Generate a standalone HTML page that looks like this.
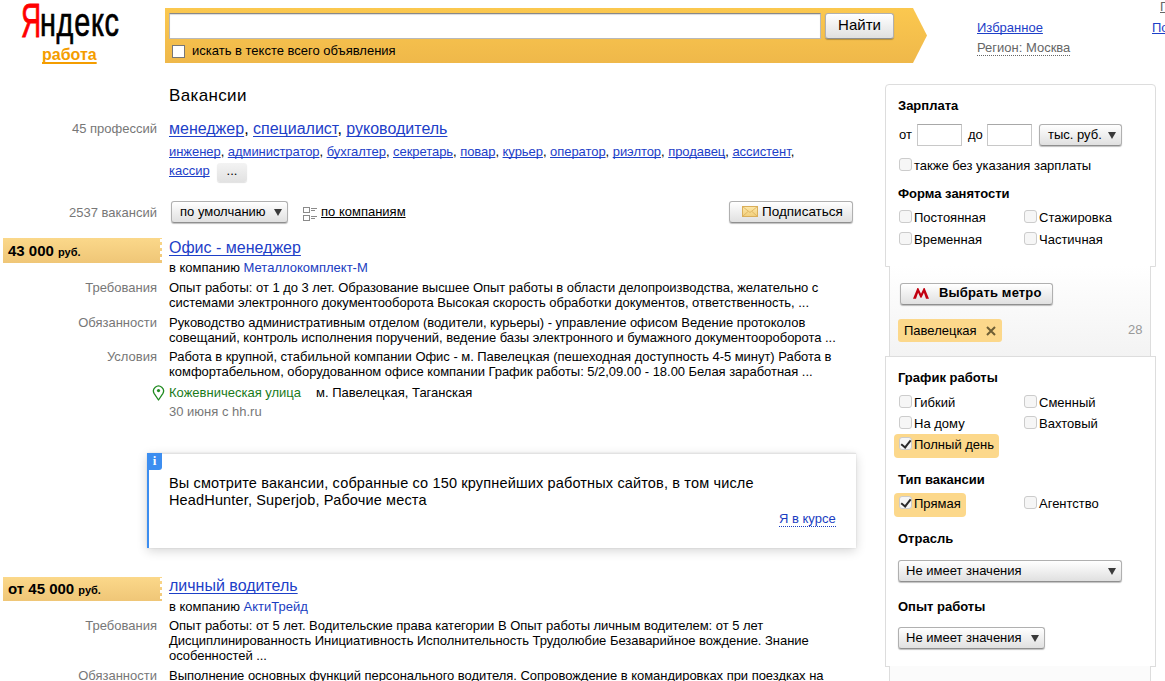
<!DOCTYPE html>
<html><head><meta charset="utf-8">
<style>
*{margin:0;padding:0;box-sizing:border-box}
html,body{width:1165px;height:681px;overflow:hidden;background:#fff}
body{font-family:"Liberation Sans",sans-serif;font-size:13px;color:#000;position:relative}
.a{position:absolute;white-space:nowrap}
a,.lnk{color:#1d40c8;text-decoration:underline}
*{text-decoration-skip-ink:none}
.t16 a{text-underline-offset:2px}
.g{color:#666}
.r{text-align:right}
.btn{position:absolute;border:1px solid #b0b0b0;border-bottom-color:#8f8f8f;border-radius:3px;background:linear-gradient(#fff,#e0e0e0);box-shadow:0 1px 1px rgba(0,0,0,.25)}
.cb{position:absolute;width:13px;height:13px;border:1px solid #ccc;border-radius:3px;background:#f6f6f6}
.lbl{position:absolute;color:#777;text-align:right;width:157px;left:0;white-space:nowrap}
.txt{position:absolute;left:169px;white-space:nowrap;line-height:15px;letter-spacing:-.035px}
.price{position:absolute;left:3px;width:159px;height:25px;background:linear-gradient(#fbd88a,#efc677);font-weight:bold}
.price::after{content:"";position:absolute;right:0;top:1px;width:2px;height:24px;background:repeating-linear-gradient(#fff 0,#fff 3px,transparent 3px,transparent 6px)}
.inp{position:absolute;background:#fff;border:1px solid #c8c8c8;border-top-color:#a8a8a8}
.arr{position:absolute;top:7px;width:0;height:0;border-left:4px solid transparent;border-right:4px solid transparent;border-top:7px solid #3a3a3a}
.chk::after{content:"";position:absolute;left:3px;top:0px;width:4px;height:8px;border-right:2px solid #2a2a2a;border-bottom:2px solid #2a2a2a;transform:rotate(38deg)}
.hd{position:absolute;font-weight:bold;white-space:nowrap}
</style></head><body>

<!-- logo -->
<div class="a" style="left:21px;top:-7px;font-size:49px;line-height:54px;color:#f00;-webkit-text-stroke:.9px #f00;transform-origin:0 0;transform:scaleX(.57)">Я</div>
<div class="a" style="left:40px;top:-3px;font-size:40px;line-height:50px;-webkit-text-stroke:.7px #000;letter-spacing:1px;transform-origin:0 0;transform:scaleX(.72)">ндекс</div>
<div class="a" style="left:42px;top:46px;font-size:16px;font-weight:bold;color:#f49d00;text-decoration:underline;text-decoration-thickness:2px;text-underline-offset:2px">работа</div>

<!-- search bar -->
<svg class="a" style="left:165px;top:8px" width="765" height="55">
<defs><linearGradient id="yg" x1="0" y1="0" x2="0" y2="1"><stop offset="0" stop-color="#fbc84f"/><stop offset="1" stop-color="#efb84a"/></linearGradient></defs>
<path d="M0 0H748L762 27.5L748 55H0Z" fill="url(#yg)"/>
</svg>
<div class="a" style="left:169px;top:13px;width:652px;height:26px;background:#fff;border:1px solid #b9b9b9;border-top-color:#888;box-shadow:inset 0 1px 1px rgba(0,0,0,.15)"></div>
<div class="btn" style="left:825px;top:13px;width:69px;height:26px;font-size:15px;text-align:center;line-height:21px">Найти</div>
<div class="a" style="left:172px;top:45px;width:13px;height:13px;background:#fff;border:1px solid #777"></div>
<div class="a" style="left:192px;top:43px;font-size:13px">искать в тексте всего объявления</div>

<!-- top right -->
<div class="a" style="left:977px;top:20px;font-size:13px"><a>Избранное</a></div>
<div class="a" style="left:977px;top:40px;font-size:13px;color:#666;border-bottom:1px dotted #666;line-height:15px">Регион: Москва</div>
<div class="a" style="left:1160px;top:-1px;font-size:13px;color:#666;text-decoration:underline">П</div>
<div class="a" style="left:1152px;top:20px;font-size:13px"><a>По</a></div>

<!-- main -->
<div class="a" style="left:169px;top:86px;font-size:17px;letter-spacing:.35px">Вакансии</div>

<div class="lbl" style="top:121px">45 профессий</div>
<div class="a t16" style="left:169px;top:120px;font-size:16px"><a>менеджер</a>, <a>специалист</a>, <a>руководитель</a></div>
<div class="a" style="left:169px;top:144px;font-size:13px;letter-spacing:-.05px"><a>инженер</a>, <a>администратор</a>, <a>бухгалтер</a>, <a>секретарь</a>, <a>повар</a>, <a>курьер</a>, <a>оператор</a>, <a>риэлтор</a>, <a>продавец</a>, <a>ассистент</a>,</div>
<div class="a" style="left:169px;top:163px;font-size:13px"><a>кассир</a></div>
<div class="a" style="left:217px;top:163px;width:30px;height:19px;background:linear-gradient(#f3f3f3,#e2e2e2);border-radius:3px;box-shadow:0 1px 1px rgba(0,0,0,.12);text-align:center;line-height:16px">...</div>

<div class="lbl" style="top:205px">2537 вакансий</div>
<div class="btn" style="left:171px;top:201px;width:117px;height:22px;line-height:20px;padding-left:8px">по умолчанию<span class="arr" style="left:102px"></span></div>
<svg class="a" style="left:302px;top:206px" width="16" height="16" viewBox="0 0 16 16" fill="none" stroke="#8a8a8a" stroke-width="1"><rect x="1.5" y="1.5" width="6" height="5"/><rect x="1.5" y="9.5" width="6" height="5"/><path d="M9 2.5H15M9 4.5H13M9 10.5H15M9 12.5H13"/></svg>
<div class="a" style="left:321px;top:204px"><span style="text-decoration:underline">по компаниям</span></div>
<div class="btn" style="left:729px;top:201px;width:124px;height:22px;line-height:20px;padding-left:32px;font-size:13.5px">Подписаться</div>
<svg class="a" style="left:742px;top:206px" width="16" height="11" viewBox="0 0 16 11"><defs><linearGradient id="eg" x1="0" y1="0" x2="0" y2="1"><stop offset="0" stop-color="#fde7a8"/><stop offset="1" stop-color="#f1cf7c"/></linearGradient></defs><rect x=".5" y=".5" width="15" height="10" fill="url(#eg)" stroke="#d9ae5a"/><path d="M.5 .5L8 6.5L15.5 .5M.5 10.5L6 5.5M15.5 10.5L10 5.5" fill="none" stroke="#d9ae5a" stroke-width=".8"/></svg>

<!-- vacancy 1 -->
<div class="price" style="top:238px"><span class="a" style="left:5px;top:4px;font-size:15px">43 000 <span style="font-size:11px">руб.</span></span></div>
<div class="a t16" style="left:169px;top:239px;font-size:16px"><a>Офис - менеджер</a></div>
<div class="a" style="left:169px;top:260px">в компанию <span style="color:#1a3dc1">Металлокомплект-М</span></div>
<div class="lbl" style="top:280px">Требования</div>
<div class="txt" style="top:280px">Опыт работы: от 1 до 3 лет. Образование высшее Опыт работы в области делопроизводства, желательно с<br>системами электронного документооборота Высокая скорость обработки документов, ответственность, ...</div>
<div class="lbl" style="top:315px">Обязанности</div>
<div class="txt" style="top:315px">Руководство административным отделом (водители, курьеры) - управление офисом Ведение протоколов<br>совещаний, контроль исполнения поручений, ведение базы электронного и бумажного документоороборота ...</div>
<div class="lbl" style="top:349px">Условия</div>
<div class="txt" style="top:349px">Работа в крупной, стабильной компании Офис - м. Павелецкая (пешеходная доступность 4-5 минут) Работа в<br>комфортабельном, оборудованном офисе компании График работы: 5/2,09.00 - 18.00 Белая заработная ...</div>
<svg class="a" style="left:152px;top:385px" width="13" height="16" viewBox="0 0 13 16"><path d="M6.5 15L2.2 8.6A5 5 0 1 1 10.8 8.6Z" fill="none" stroke="#1f8a1f" stroke-width="1.3" stroke-linejoin="round"/><circle cx="6.5" cy="5.6" r="1.6" fill="#1f8a1f"/></svg>
<div class="a" style="left:169px;top:385px;color:#1a7a1a">Кожевническая улица</div>
<div class="a" style="left:316px;top:385px">м. Павелецкая, Таганская</div>
<div class="a g" style="left:169px;top:404px;color:#777">30 июня с hh.ru</div>

<!-- info box -->
<div class="a" style="left:147px;top:453px;width:709px;height:95px;background:#fff;border-left:2px solid #3d8ef0;border-top:1px solid #e2e2e2;box-shadow:0 3px 10px rgba(0,0,0,.16),0 0 2px rgba(0,0,0,.1)"></div>
<div class="a" style="left:147px;top:453px;width:15px;height:17px;background:#3d8ef0;color:#fff;font-weight:bold;font-family:'Liberation Serif',serif;font-size:13px;text-align:center;line-height:16px;border-radius:0 0 3px 0">i</div>
<div class="a" style="left:169px;top:475px;font-size:14.5px;line-height:17px;letter-spacing:.15px">Вы смотрите вакансии, собранные со 150 крупнейших работных сайтов, в том числе<br>HeadHunter, Superjob, Рабочие места</div>
<div class="a" style="left:779px;top:512px;color:#1a3dc1;border-bottom:1px dotted #1a3dc1;line-height:14px">Я в курсе</div>

<!-- vacancy 2 -->
<div class="price" style="top:577px;height:24px"><span class="a" style="left:5px;top:3px;font-size:15px">от 45 000 <span style="font-size:11px">руб.</span></span></div>
<div class="a t16" style="left:169px;top:577px;font-size:16px"><a>личный водитель</a></div>
<div class="a" style="left:169px;top:599px">в компанию <span style="color:#1a3dc1">АктиТрейд</span></div>
<div class="lbl" style="top:618px">Требования</div>
<div class="txt" style="top:618px">Опыт работы: от 5 лет. Водительские права категории В Опыт работы личным водителем: от 5 лет<br>Дисциплинированность Инициативность Исполнительность Трудолюбие Безаварийное вождение. Знание<br>особенностей ...</div>
<div class="lbl" style="top:668px">Обязанности</div>
<div class="txt" style="top:668px">Выполнение основных функций персонального водителя. Сопровождение в командировках при поездках на</div>

<!-- sidebar -->
<div class="a" style="left:885px;top:84px;width:271px;height:183px;border:1px solid #ddd;border-bottom:1px solid #ddd;border-radius:4px 4px 0 0"></div>
<div class="hd" style="left:898px;top:98px">Зарплата</div>
<div class="a" style="left:899px;top:127px">от</div>
<div class="inp" style="left:917px;top:124px;width:45px;height:22px"></div>
<div class="a" style="left:968px;top:127px">до</div>
<div class="inp" style="left:987px;top:124px;width:45px;height:22px"></div>
<div class="btn" style="left:1039px;top:124px;width:83px;height:22px;line-height:20px;padding-left:8px">тыс. руб. <span class="arr" style="left:68px"></span></div>
<div class="cb" style="left:899px;top:158px"></div>
<div class="a" style="left:914px;top:158px">также без указания зарплаты</div>
<div class="hd" style="left:898px;top:186px">Форма занятости</div>
<div class="cb" style="left:899px;top:210px"></div><div class="a" style="left:914px;top:210px">Постоянная</div>
<div class="cb" style="left:1024px;top:210px"></div><div class="a" style="left:1039px;top:210px">Стажировка</div>
<div class="cb" style="left:899px;top:232px"></div><div class="a" style="left:914px;top:232px">Временная</div>
<div class="cb" style="left:1024px;top:232px"></div><div class="a" style="left:1039px;top:232px">Частичная</div>

<div class="a" style="left:889px;top:266px;width:262px;height:91px;border-left:1px solid #ddd;border-right:1px solid #ddd;background:linear-gradient(#fff,#f3f3f3)"></div>
<div class="btn" style="left:900px;top:283px;width:153px;height:22px;font-weight:bold;font-size:13px;letter-spacing:.15px;line-height:18px;padding-left:38px">Выбрать метро</div>
<svg class="a" style="left:913px;top:288px" width="16" height="11" viewBox="0 0 16 11"><path d="M0 10.8L4.4 0H5.3L8 5.8L10.7 0H11.6L16 10.8H13L10.9 4.8L8.5 9.8H7.5L5.1 4.8L3 10.8Z" fill="#c20010"/></svg>
<div class="a" style="left:898px;top:319px;width:104px;height:23px;background:#fcd88b;border-radius:3px"></div>
<div class="a" style="left:904px;top:323px">Павелецкая</div>
<svg class="a" style="left:986px;top:326px" width="10" height="10" viewBox="0 0 10 10"><path d="M1 1L9 9M9 1L1 9" stroke="#6e5e34" stroke-width="2"/></svg>
<div class="a" style="left:1128px;top:322px;color:#999">28</div>

<div class="a" style="left:885px;top:356px;width:271px;height:311px;border:1px solid #ddd"></div>
<div class="hd" style="left:898px;top:370px">График работы</div>
<div class="cb" style="left:899px;top:395px"></div><div class="a" style="left:914px;top:395px">Гибкий</div>
<div class="cb" style="left:1024px;top:395px"></div><div class="a" style="left:1039px;top:395px">Сменный</div>
<div class="cb" style="left:899px;top:416px"></div><div class="a" style="left:914px;top:416px">На дому</div>
<div class="cb" style="left:1024px;top:416px"></div><div class="a" style="left:1039px;top:416px">Вахтовый</div>
<div class="a" style="left:894px;top:434px;width:105px;height:24px;background:#fcd88b;border-radius:4px"></div>
<div class="cb chk" style="left:899px;top:437px"></div><div class="a" style="left:914px;top:437px">Полный день</div>
<div class="hd" style="left:898px;top:472px">Тип вакансии</div>
<div class="a" style="left:894px;top:493px;width:72px;height:24px;background:#fcd88b;border-radius:4px"></div>
<div class="cb chk" style="left:899px;top:496px"></div><div class="a" style="left:914px;top:496px">Прямая</div>
<div class="cb" style="left:1024px;top:496px"></div><div class="a" style="left:1039px;top:496px">Агентство</div>
<div class="hd" style="left:898px;top:531px">Отрасль</div>
<div class="btn" style="left:898px;top:560px;width:224px;height:22px;line-height:20px;padding-left:7px">Не имеет значения<span class="arr" style="left:209px"></span></div>
<div class="hd" style="left:898px;top:599px">Опыт работы</div>
<div class="btn" style="left:898px;top:627px;width:147px;height:22px;line-height:20px;padding-left:7px">Не имеет значения<span class="arr" style="left:132px"></span></div>
<div class="a" style="left:889px;top:666px;width:262px;height:20px;border-left:1px solid #ddd;border-right:1px solid #ddd;background:#fbfbfb"></div>
</body></html>
